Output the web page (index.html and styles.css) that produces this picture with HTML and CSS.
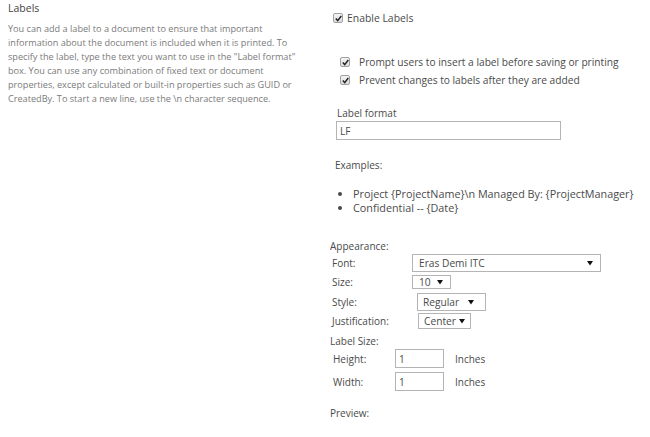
FILE: index.html
```html
<!DOCTYPE html>
<html>
<head>
<meta charset="utf-8">
<title>Labels</title>
<link rel="stylesheet" href="styles.css">
</head>
<body>
<div class="page">
  <div class="desc">
    <h2 class="title">Labels</h2>
    <p class="text">You can add a label to a document to ensure that important<br>information about the document is included when it is printed. To<br>specify the label, type the text you want to use in the "Label format"<br>box. You can use any combination of fixed text or document<br>properties, except calculated or built-in properties such as GUID or<br>CreatedBy. To start a new line, use the \n character sequence.</p>
  </div>
  <div class="settings">
    <div class="check enable"><span class="box"><svg width="7" height="7" viewBox="0 0 7 7"><path d="M0.8 3.6 L2.7 5.6 L6.3 1" fill="none" stroke="#222" stroke-width="1.5"/></svg></span><span>Enable Labels</span></div>
    <div class="suboptions">
      <div class="check sub"><span class="box"><svg width="7" height="7" viewBox="0 0 7 7"><path d="M0.8 3.6 L2.7 5.6 L6.3 1" fill="none" stroke="#222" stroke-width="1.5"/></svg></span><span>Prompt users to insert a label before saving or printing</span></div>
      <div class="check sub"><span class="box"><svg width="7" height="7" viewBox="0 0 7 7"><path d="M0.8 3.6 L2.7 5.6 L6.3 1" fill="none" stroke="#222" stroke-width="1.5"/></svg></span><span>Prevent changes to labels after they are added</span></div>
    </div>
    <div class="format">
      <div class="field-label">Label format</div>
      <div class="textbox wide">LF</div>
    </div>
    <div class="examples">
      <div class="field-label">Examples:</div>
      <ul class="example-list">
        <li>Project {ProjectName}\n Managed By: {ProjectManager}</li>
        <li>Confidential -- {Date}</li>
      </ul>
    </div>
    <div class="appearance">
      <div class="section-label">Appearance:</div>
      <div class="app-grid">
        <div class="row-label">Font:</div>
        <div class="select s-font"><span>Eras Demi ITC</span><svg class="arrow" width="6" height="6" viewBox="0 0 6 6"><path d="M0 1 L6 1 L3 5.5 Z" fill="#111"/></svg></div>
        <div class="row-label">Size:</div>
        <div class="select s-size"><span>10</span><svg class="arrow" width="6" height="6" viewBox="0 0 6 6"><path d="M0 1 L6 1 L3 5.5 Z" fill="#111"/></svg></div>
        <div class="row-label">Style:</div>
        <div class="select s-style"><span>Regular</span><svg class="arrow" width="6" height="6" viewBox="0 0 6 6"><path d="M0 1 L6 1 L3 5.5 Z" fill="#111"/></svg></div>
        <div class="row-label">Justification:</div>
        <div class="select s-just"><span>Center</span><svg class="arrow" width="6" height="6" viewBox="0 0 6 6"><path d="M0 1 L6 1 L3 5.5 Z" fill="#111"/></svg></div>
      </div>
      <div class="section-label size-label">Label Size:</div>
      <div class="size-grid">
        <div class="row-label">Height:</div>
        <div class="textbox small">1</div>
        <div class="unit">Inches</div>
        <div class="row-label">Width:</div>
        <div class="textbox small">1</div>
        <div class="unit">Inches</div>
      </div>
      <div class="section-label preview">Preview:</div>
    </div>
  </div>
</div>
</body>
</html>
```
FILE: styles.css
```css
html, body {
  margin: 0;
  padding: 0;
  background: #ffffff;
}
body {
  font-family: "Open Sans", "Noto Sans", sans-serif;
  color: #4a4a4a;
  font-size: 10px;
}
.page {
  display: flex;
  width: 650px;
  height: 437px;
  overflow: hidden;
}
.desc {
  width: 322px;
  padding: 1px 0 0 8px;
  box-sizing: border-box;
}
.title {
  margin: 0;
  font-size: 10.5px;
  font-weight: normal;
  line-height: 14px;
  color: #444;
}
.text {
  margin: 7px 0 0 0;
  font-size: 9.15px;
  line-height: 14px;
  color: #7a7a7a;
  white-space: nowrap;
}
.settings {
  flex: 1;
  padding-left: 8px;
}
.check {
  display: flex;
  align-items: center;
  line-height: 14px;
}
.box {
  width: 8px;
  height: 8px;
  border: 1px solid #a0a0a0;
  border-radius: 2px;
  background: linear-gradient(#f4f4f4, #dcdcdc);
  display: flex;
  align-items: center;
  justify-content: center;
  flex: none;
}
.enable {
  margin: 11px 0 0 3px;
  font-size: 10.4px;
  gap: 4px;
}
.suboptions {
  margin: 28px 0 0 10px;
}
.sub {
  line-height: 18px;
  font-size: 10.2px;
  gap: 9px;
}
.format {
  margin: 17px 0 0 6px;
}
.field-label {
  line-height: 14px;
  font-size: 10px;
}
.format .field-label {
  padding-left: 1px;
}
.textbox {
  box-sizing: border-box;
  border: 1px solid #b4b4b4;
  background: #fff;
  font-size: 10px;
  padding-left: 3px;
  display: flex;
  align-items: center;
}
.wide {
  width: 225px;
  height: 19px;
  margin-top: 1px;
}
.examples {
  margin: 18px 0 0 5px;
}
.example-list {
  margin: 15px 0 0 0;
  padding-left: 18px;
  line-height: 14px;
  font-size: 10.8px;
}
.appearance {
  margin-top: 24px;
}
.section-label {
  line-height: 14px;
  font-size: 10px;
}
.app-grid {
  display: grid;
  grid-template-columns: 80px auto;
  grid-auto-rows: 19.5px;
  align-items: center;
  justify-items: start;
  padding-left: 2px;
}
.row-label {
  font-size: 10px;
  line-height: 14px;
}
.select {
  box-sizing: border-box;
  height: 18px;
  border: 1px solid #b4b4b4;
  background: #fff;
  display: flex;
  align-items: center;
  justify-content: space-between;
  padding: 0 4px 0 6px;
  font-size: 10.2px;
}
.arrow {
  flex: none;
}
.s-font { width: 189px; padding-right: 7px; }
.s-size { width: 39px; height: 14px; justify-content: flex-start; gap: 6px; }
.s-style { width: 69px; margin-left: 5px; padding-left: 5px; padding-right: 11px; }
.s-just { width: 53px; margin-left: 6px; height: 16px; padding-left: 5px; padding-right: 5px; }
.size-label {
  margin-top: 4px;
  line-height: 12px;
}
.size-grid {
  display: grid;
  grid-template-columns: 62px 49px auto;
  grid-auto-rows: 23px;
  align-items: center;
  justify-items: start;
  padding-left: 3px;
  margin-top: 0;
}
.small {
  width: 49px;
  height: 19px;
}
.unit {
  padding-left: 11px;
  font-size: 10px;
}
.preview {
  margin-top: 13px;
}
```
